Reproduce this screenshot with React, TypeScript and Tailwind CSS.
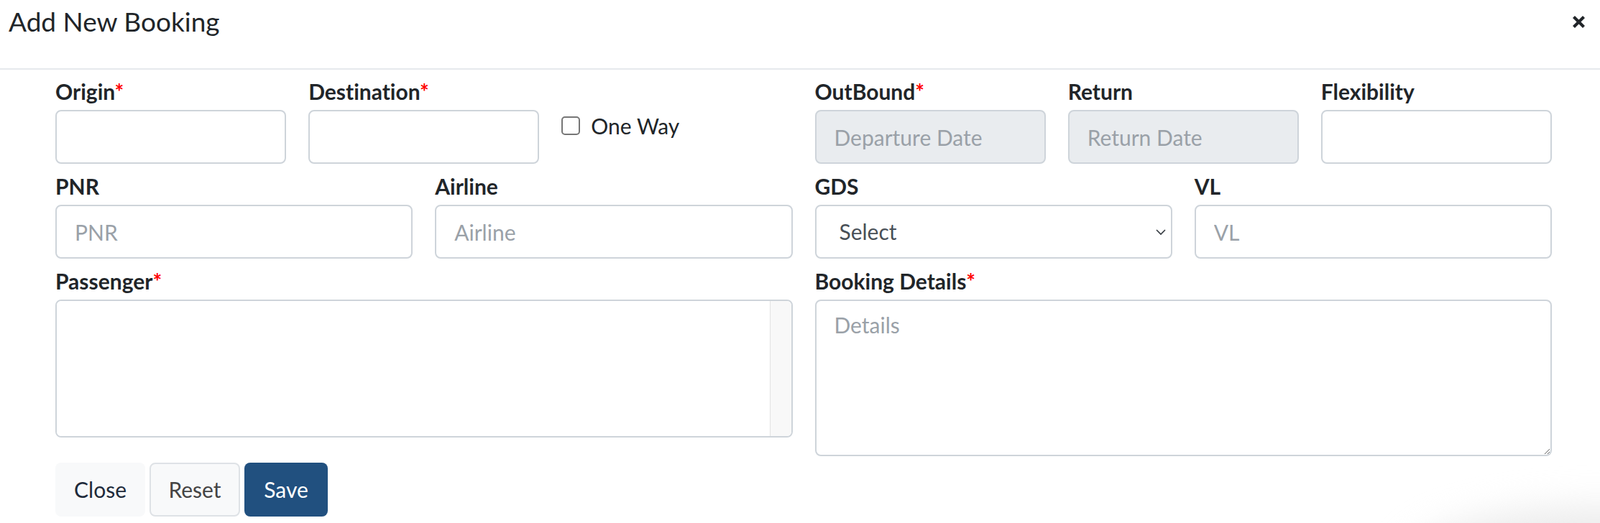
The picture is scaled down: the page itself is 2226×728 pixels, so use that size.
import React from "react";

const labelCls = "block text-[30px] leading-[36px] font-bold text-[#212529] mb-[8px] whitespace-nowrap";
const baseInput =
    "block w-full h-[75px] rounded-[8px] border-2 border-[#ced4da] px-[25px] text-[30px] text-[#495057] placeholder:text-[#9aa1a8] outline-none";
const inputCls = baseInput + " bg-white";
const disabledCls = baseInput + " bg-[#e9ecef]";

interface FieldProps {
    label: string;
    required?: boolean;
    children: React.ReactNode;
};

const Field = ({ label, required, children }: FieldProps) => {
    return (
        <div>
            <label className={labelCls}>
                {label}
                {required && <span className="text-[#ff0000]">*</span>}
            </label>
            {children}
        </div>
    );
};

const CloseIcon = () => {
    return (
        <svg width="19" height="19" viewBox="0 0 19 19" fill="none">
            <path d="M2.5 2.5L16.5 16.5M16.5 2.5L2.5 16.5" stroke="#212529" strokeWidth="4.2" />
        </svg>
    );
};

export default function App() {
    return (
        <div className="relative h-[728px] overflow-hidden bg-white font-['Lato','Noto_Sans',sans-serif] text-[#212529] [font-variant-ligatures:none]">

            <div className="flex h-[97px] items-start justify-between border-b-2 border-[#e6e9ed] pl-[12px] pr-[20px]">
                <h5 className="pt-[7px] text-[37px] leading-[46px] text-[#212529]">Add New Booking</h5>
                <button className="mt-[21px]" aria-label="Close">
                    <CloseIcon></CloseIcon>
                </button>
            </div>

            <div className="pt-[12px] pl-[77px] pr-[67px]">
                <div className="grid grid-cols-2 items-start gap-x-[31px] gap-y-[13px]">

                    <div className="grid grid-cols-3 gap-x-[31px]">
                        <Field label="Origin" required>
                            <input className={inputCls} />
                        </Field>
                        <Field label="Destination" required>
                            <input className={inputCls} />
                        </Field>
                        <div className="mt-[48px] flex h-[36px] items-center">
                            <input
                                type="checkbox"
                                className="h-[26px] w-[26px] appearance-none rounded-[5px] border-2 border-[#767676] bg-white"
                            />
                            <span className="ml-[15px] text-[30px] leading-[36px]">One Way</span>
                        </div>
                    </div>

                    <div className="grid grid-cols-3 gap-x-[31px]">
                        <Field label="OutBound" required>
                            <input className={disabledCls} placeholder="Departure Date" disabled />
                        </Field>
                        <Field label="Return">
                            <input className={disabledCls} placeholder="Return Date" disabled />
                        </Field>
                        <Field label="Flexibility">
                            <input className={inputCls} />
                        </Field>
                    </div>

                    <div className="grid grid-cols-2 gap-x-[31px]">
                        <Field label="PNR">
                            <input className={inputCls} placeholder="PNR" />
                        </Field>
                        <Field label="Airline">
                            <input className={inputCls} placeholder="Airline" />
                        </Field>
                    </div>

                    <div className="grid grid-cols-2 gap-x-[31px]">
                        <Field label="GDS">
                            <div className="relative">
                                <select className={inputCls + " appearance-none pl-[32px] text-[#343a40]"} defaultValue="">
                                    <option value="">Select</option>
                                    <option value="amadeus">Amadeus</option>
                                    <option value="sabre">Sabre</option>
                                    <option value="galileo">Galileo</option>
                                </select>
                                <svg
                                    className="pointer-events-none absolute right-[8px] top-[33px]"
                                    width="16"
                                    height="10"
                                    viewBox="0 0 16 10"
                                    fill="none"
                                >
                                    <path d="M2 2L8 8L14 2" stroke="#343a40" strokeWidth="1.6" />
                                </svg>
                            </div>
                        </Field>
                        <Field label="VL">
                            <input className={inputCls} placeholder="VL" />
                        </Field>
                    </div>

                    <Field label="Passenger" required>
                        {/* textarea with its scrollbar track drawn beside it */}
                        <div className="flex h-[192px] w-full overflow-hidden rounded-[8px] border-2 border-[#ced4da] bg-white">
                            <textarea className="block h-full flex-1 resize-none bg-white px-[25px] pt-[11px] text-[30px] leading-[45px] outline-none"></textarea>
                            <div className="w-[30px] border-l border-[#e3e3e3] bg-[#f8f8f8]"></div>
                        </div>
                    </Field>

                    <Field label="Booking Details" required>
                        <textarea
                            className="block h-[218px] w-full rounded-[8px] border-2 border-[#ced4da] bg-white px-[25px] pt-[11px] text-[30px] leading-[45px] text-[#495057] placeholder:text-[#9aa1a8] outline-none"
                            placeholder="Details"
                        ></textarea>
                    </Field>
                </div>

                <div className="mt-[9px] flex gap-[6px]">
                    <button className="h-[75px] w-[125px] rounded-[8px] bg-[#f8f9fa] text-[30px] text-[#1e2a3a]">
                        Close
                    </button>
                    <button className="h-[75px] w-[126px] rounded-[8px] border-2 border-[#dee2e6] bg-[#f8f9fa] text-[30px] text-[#444444]">
                        Reset
                    </button>
                    <button className="h-[75px] w-[116px] rounded-[8px] bg-[#21507f] text-[30px] text-white">
                        Save
                    </button>
                </div>
            </div>

            <div className="pointer-events-none absolute left-[1960px] top-[705px] h-[160px] w-[520px] rounded-[50%] bg-[#ececec] blur-[24px]"></div>
        </div>
    );
};
